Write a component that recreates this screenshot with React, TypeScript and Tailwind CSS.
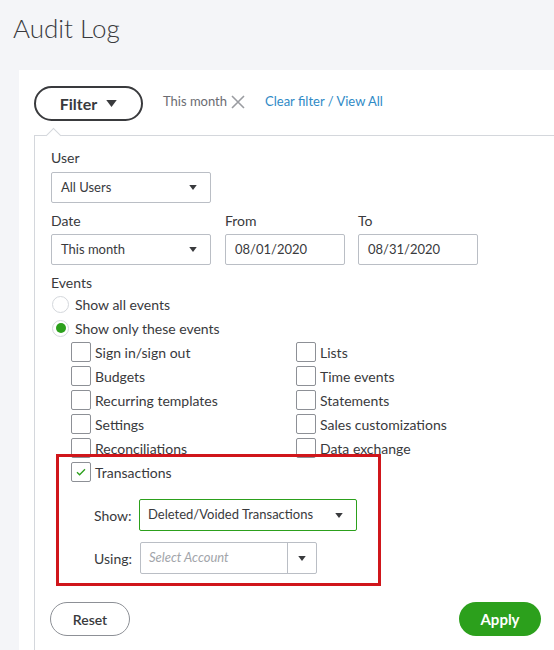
import React from "react";

const Caret = ({ w = 9, h = 6 }: { w?: number; h?: number }) => (
  <svg width={w} height={h} viewBox="0 0 9 6" className="shrink-0">
    <path d="M0 0h9L4.5 6z" fill="#393a3d" />
  </svg>
);

function Checkbox({ checked }: { checked?: boolean }) {
  return (
    <span className="flex h-5 w-5 shrink-0 items-center justify-center rounded-[2px] border border-[#8d9096] bg-white">
      {checked && (
        <svg width="10" height="8" viewBox="0 0 10 8">
          <path d="M1 4.2l2.6 2.6L9 1.2" fill="none" stroke="#2ca01c" strokeWidth="1.3" />
        </svg>
      )}
    </span>
  );
}

function CheckRow({ label, checked }: { label: string; checked?: boolean }) {
  return (
    <div className="flex h-6 items-center gap-[4px]">
      <Checkbox checked={checked} />
      <span className="text-[14px] text-[#393a3d]">{label}</span>
    </div>
  );
}

function Radio({ label, selected }: { label: string; selected?: boolean }) {
  return (
    <div className="flex h-6 items-center gap-[6px] pl-[1px]">
      <span className="flex h-[17px] w-[17px] items-center justify-center rounded-full border border-[#d4d7dc] bg-white">
        {selected && <span className="h-[10px] w-[10px] rounded-full bg-[#2ca01c]" />}
      </span>
      <span className="text-[14px] text-[#393a3d]">{label}</span>
    </div>
  );
}

function Select({ value, width }: { value: string; width: string }) {
  return (
    <div className={`flex h-[31px] items-center justify-between rounded-[2px] border border-[#babec5] bg-white pl-[9px] pr-[13px] ${width}`}>
      <span className="text-[13px] text-[#393a3d]">{value}</span>
      <Caret w={8} h={5} />
    </div>
  );
}

function Input({ value }: { value: string }) {
  return (
    <div className="flex h-[31px] w-[120px] items-center rounded-[2px] border border-[#babec5] bg-white pl-[9px]">
      <span className="text-[13px] text-[#393a3d]">{value}</span>
    </div>
  );
}

export default function App() {
  return (
    <div className="h-[650px] w-[554px] overflow-hidden bg-[#f4f5f8] font-['Lato',sans-serif] text-[#393a3d]">
      <h1 className="pl-[13px] pt-[12px] text-[26px] font-light leading-8 text-[#393a3d]">Audit Log</h1>
      <div className="ml-[19px] mt-[26px] h-[600px] bg-white pl-[15px] pt-[16px]">
        <div className="flex items-center">
          <div className="flex h-[35px] w-[109px] items-center justify-center gap-[9px] rounded-full border-2 border-[#393a3d]">
            <span className="text-[16px] font-bold text-[#393a3d]">Filter</span>
            <Caret w={11} h={7} />
          </div>
          <span className="ml-[20px] mt-[-3px] text-[13px] text-[#6b6c72]">This month</span>
          <svg width="14" height="14" viewBox="0 0 14 14" className="ml-[4px] mt-[-3px]">
            <path d="M1 1l12 12M13 1L1 13" stroke="#9a9ca1" strokeWidth="1.6" />
          </svg>
          <span className="ml-[20px] mt-[-3px] text-[13px] text-[#2f8ac6]">Clear filter / View All</span>
        </div>

        <div className="relative mt-[14px] h-[600px] border-l border-t border-[#d4d7dc] pl-[16px] pt-[12px]">
          <div className="absolute left-[13px] top-[-6px] h-[11px] w-[11px] rotate-45 border-l border-t border-[#d4d7dc] bg-white" />

          <div className="h-5 text-[14px] leading-5">User</div>
          <div className="mt-[4px]">
            <Select value="All Users" width="w-[160px]" />
          </div>

          <div className="mt-[8px] flex">
            <div className="w-[174px]">
              <div className="h-5 text-[14px] leading-5">Date</div>
              <div className="mt-[3px]">
                <Select value="This month" width="w-[160px]" />
              </div>
            </div>
            <div className="w-[133px]">
              <div className="h-5 text-[14px] leading-5">From</div>
              <div className="mt-[3px]">
                <Input value="08/01/2020" />
              </div>
            </div>
            <div className="w-[120px]">
              <div className="h-5 text-[14px] leading-5">To</div>
              <div className="mt-[3px]">
                <Input value="08/31/2020" />
              </div>
            </div>
          </div>

          <div className="mt-[8px] h-5 text-[14px] leading-5">Events</div>
          <div className="mt-[-1px]">
            <Radio label="Show all events" />
            <Radio label="Show only these events" selected />
          </div>

          <div className="grid grid-cols-[225px_auto] pl-[20px]">
            <CheckRow label="Sign in/sign out" />
            <CheckRow label="Lists" />
            <CheckRow label="Budgets" />
            <CheckRow label="Time events" />
            <CheckRow label="Recurring templates" />
            <CheckRow label="Statements" />
            <CheckRow label="Settings" />
            <CheckRow label="Sales customizations" />
            <CheckRow label="Reconciliations" />
            <CheckRow label="Data exchange" />
          </div>

          <div className="relative ml-[5px] mt-[-6px] w-[325px] border-[3px] border-[#d0161b] pb-[9px] pt-[3px]">
            <div className="pl-[12px]">
              <CheckRow label="Transactions" checked />
            </div>
            <div className="mt-[15px] flex items-center pl-[35px]">
              <span className="w-[45px] text-[14px] text-[#393a3d]">Show:</span>
              <div className="flex h-[32px] w-[218px] items-center justify-between rounded-[2px] border border-[#2ca01c] bg-white pl-[8px] pr-[13px]">
                <span className="text-[13px] text-[#393a3d]">Deleted/Voided Transactions</span>
                <Caret w={8} h={5} />
              </div>
            </div>
            <div className="mt-[11px] flex items-center pl-[35px]">
              <span className="w-[46px] text-[14px] text-[#393a3d]">Using:</span>
              <div className="flex h-[32px] w-[177px] items-center rounded-[2px] border border-[#babec5] bg-white">
                <span className="flex-1 pl-[8px] text-[13px] italic text-[#a2a5aa]">Select Account</span>
                <div className="flex h-full w-[29px] items-center justify-center border-l border-[#babec5]">
                  <Caret w={8} h={5} />
                </div>
              </div>
            </div>
          </div>

          <div className="ml-[-1px] mt-[16px] flex w-[491px] items-center justify-between">
            <div className="flex h-[34px] w-[80px] items-center justify-center rounded-full border border-[#8d9096] text-[14px] font-semibold text-[#393a3d]">
              Reset
            </div>
            <div className="flex h-[34px] w-[82px] items-center justify-center rounded-full bg-[#2ca01c] text-[15px] font-bold text-white">
              Apply
            </div>
          </div>
        </div>
      </div>
    </div>
  );
}
